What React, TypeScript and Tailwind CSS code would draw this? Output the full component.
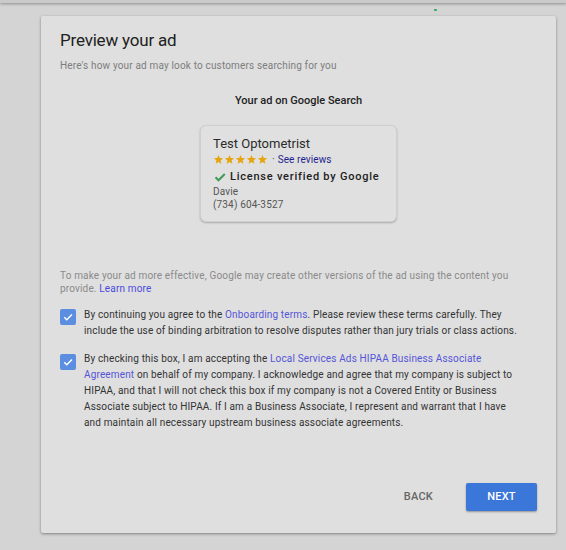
import React from "react";

const Star = () => (
  <svg width="11" height="11" viewBox="0 0 24 24" className="block">
    <path fill="#e6a50f" d="M12 17.27L18.18 21l-1.64-7.03L22 9.24l-7.19-.61L12 2 9.19 8.63 2 9.24l5.46 4.73L5.82 21z" />
  </svg>
);

const Checkbox = () => (
  <div className="w-[16px] h-[16px] shrink-0 rounded-[2px] bg-[#5b8ee0] flex items-center justify-center">
    <svg width="12" height="12" viewBox="0 0 24 24">
      <path fill="none" stroke="#ffffff" strokeWidth="3" d="M4.5 12.5l5 5L20 7" />
    </svg>
  </div>
);

export default function App() {
  return (
    <div
      className="relative w-full h-[550px] bg-[#d4d4d4] overflow-hidden"
      style={{ fontFamily: "Roboto, 'Liberation Sans', sans-serif" }}
    >
      <div className="h-[3px] bg-[#cacaca] shadow-[0_1px_3px_rgba(0,0,0,0.35)]" />
      <div className="absolute left-[434px] top-[9px] w-[3px] h-[2px] bg-[#2aa96a] rounded-full" />
      <div className="ml-[41px] mt-[13px] w-[515px] h-[517px] bg-[#dfdfdf] rounded-[2px] shadow-[0_1px_3px_rgba(0,0,0,0.4)] flex flex-col px-[19px] pt-[12px] pb-[22px]">
        <h1 className="text-[17px] leading-[24px] text-[#212121] tracking-[-0.2px]">Preview your ad</h1>
        <p className="mt-[7px] text-[10px] leading-[14px] tracking-[0.16px] text-[#7d7d7d]">
          Here's how your ad may look to customers searching for you
        </p>
        <p className="mt-[20px] text-center text-[11px] leading-[16px] font-medium text-[#222]">
          Your ad on Google Search
        </p>
        <div className="mt-[16px] mx-auto w-[197px] h-[97px] rounded-[6px] border border-[#cfcfcf] bg-[#e0e0e0] shadow-[0_1px_2px_rgba(0,0,0,0.25)] pl-[12px] pr-[4px] pt-[10px]">
          <div className="text-[13px] leading-[16px] text-[#2b2b2b]">Test Optometrist</div>
          <div className="h-[14px] flex items-center">
            <div className="flex">
              <Star />
              <Star />
              <Star />
              <Star />
              <Star />
            </div>
            <span className="ml-[4px] text-[10px] text-[#555]">·</span>
            <span className="ml-[3px] text-[10px] tracking-[0.1px] text-[#1f1f8f]">See reviews</span>
          </div>
          <div className="mt-[3px] h-[16px] flex items-center whitespace-nowrap">
            <svg width="12" height="12" viewBox="0 0 24 24" className="ml-[1px] shrink-0">
              <path fill="none" stroke="#3d9a5b" strokeWidth="4" d="M3 12.5l6 6L21.5 6" />
            </svg>
            <span className="ml-[4px] text-[11px] leading-[16px] font-medium tracking-[0.07em] text-[#222]">
              License verified by Google
            </span>
          </div>
          <div className="text-[10px] leading-[13px] tracking-[0.15px] text-[#555]">Davie</div>
          <div className="text-[10px] leading-[13px] tracking-[0.15px] text-[#555]">(734) 604-3527</div>
        </div>
        <p className="mt-[47px] pr-[17px] text-[10px] leading-[13px] tracking-[0.16px] text-[#8a8a8a]">
          To make your ad more effective, Google may create other versions of the ad using the content you provide.{" "}
          <span className="text-[#4a4ade]">Learn more</span>
        </p>
        <div className="mt-[12px] pr-[17px] flex gap-[8px]">
          <div className="mt-[2px]">
            <Checkbox />
          </div>
          <p className="text-[10px] leading-[16px] tracking-[0.15px] text-[#333]">
            By continuing you agree to the <span className="text-[#5555d8]">Onboarding terms</span>. Please review these
            terms carefully. They include the use of binding arbitration to resolve disputes rather than jury trials or
            class actions.
          </p>
        </div>
        <div className="mt-[12px] pr-[17px] flex gap-[8px]">
          <div className="mt-[3px]">
            <Checkbox />
          </div>
          <p className="text-[10px] leading-[16px] tracking-[0.15px] text-[#333]">
            By checking this box, I am accepting the{" "}
            <span className="text-[#5555d8]">Local Services Ads HIPAA Business Associate Agreement</span> on behalf of my
            company. I acknowledge and agree that my company is subject to HIPAA, and that I will not check this box if my
            company is not a Covered Entity or Business Associate subject to HIPAA. If I am a Business Associate, I
            represent and warrant that I have and maintain all necessary upstream business associate agreements.
          </p>
        </div>
        <div className="mt-auto flex items-center justify-end">
          <button className="text-[11px] font-medium text-[#666] tracking-[0.02em] mr-[33px]">BACK</button>
          <button className="w-[71px] h-[28px] rounded-[2px] bg-[#3b77d8] text-white text-[11px] font-medium tracking-[0.02em] shadow-[0_1px_2px_rgba(0,0,0,0.35)]">
            NEXT
          </button>
        </div>
      </div>
    </div>
  );
}
